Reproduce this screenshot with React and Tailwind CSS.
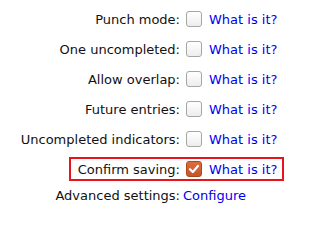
import React from 'react';

const rows = [
    'Punch mode:',
    'One uncompleted:',
    'Allow overlap:',
    'Future entries:',
    'Uncompleted indicators:',
];

const Box = ({ checked }) => {
    if (checked) {
        return (
            <span className="flex h-[16px] w-[16px] shrink-0 items-center justify-center rounded-[3px] border border-[#a9481f] bg-gradient-to-b from-[#de6d3c] to-[#c4552a]">
                <svg width="12" height="12" viewBox="0 0 12 12">
                    <path d="M2 6.2 L4.8 9 L10 3" fill="none" stroke="#ffffff" strokeWidth="2.2" strokeLinecap="round" strokeLinejoin="round" />
                </svg>
            </span>
        );
    }
    return (
        <span className="block h-[16px] w-[16px] shrink-0 rounded-[3px] border border-[#a6a6a6] bg-gradient-to-b from-[#ffffff] to-[#ededed]"></span>
    );
};

const Link = ({ children }) => (
    <a href="#" className="text-[#0000ee] no-underline">{children}</a>
);

export default function App() {
    return (
        <div className="h-[214px] w-[312px] bg-white pt-[4px] text-[13px] leading-[15px] text-[#111111]" style={{ fontFamily: '"DejaVu Sans", sans-serif' }}>
            {/* plain rows */}
            {rows.map((label) => (
                <div key={label} className="flex h-[30px] items-center">
                    <span className="w-[180px] shrink-0 whitespace-nowrap text-right">{label}</span>
                    <span className="ml-[6px]"><Box /></span>
                    <span className="ml-[7px] whitespace-nowrap"><Link>What is it?</Link></span>
                </div>
            ))}

            {/* highlighted row */}
            <div className="flex h-[30px] items-center">
                <div className="ml-[69px] flex h-[24px] w-[215px] items-center border-2 border-[#e8141b]">
                    <span className="w-[109px] shrink-0 whitespace-nowrap text-right">Confirm saving:</span>
                    <span className="ml-[6px]"><Box checked /></span>
                    <span className="ml-[7px] whitespace-nowrap"><Link>What is it?</Link></span>
                </div>
            </div>

            {/* advanced */}
            <div className="flex h-[22px] items-center">
                <span className="w-[180px] shrink-0 whitespace-nowrap text-right">Advanced settings:</span>
                <span className="ml-[3px] whitespace-nowrap"><Link>Configure</Link></span>
            </div>
        </div>
    );
}
